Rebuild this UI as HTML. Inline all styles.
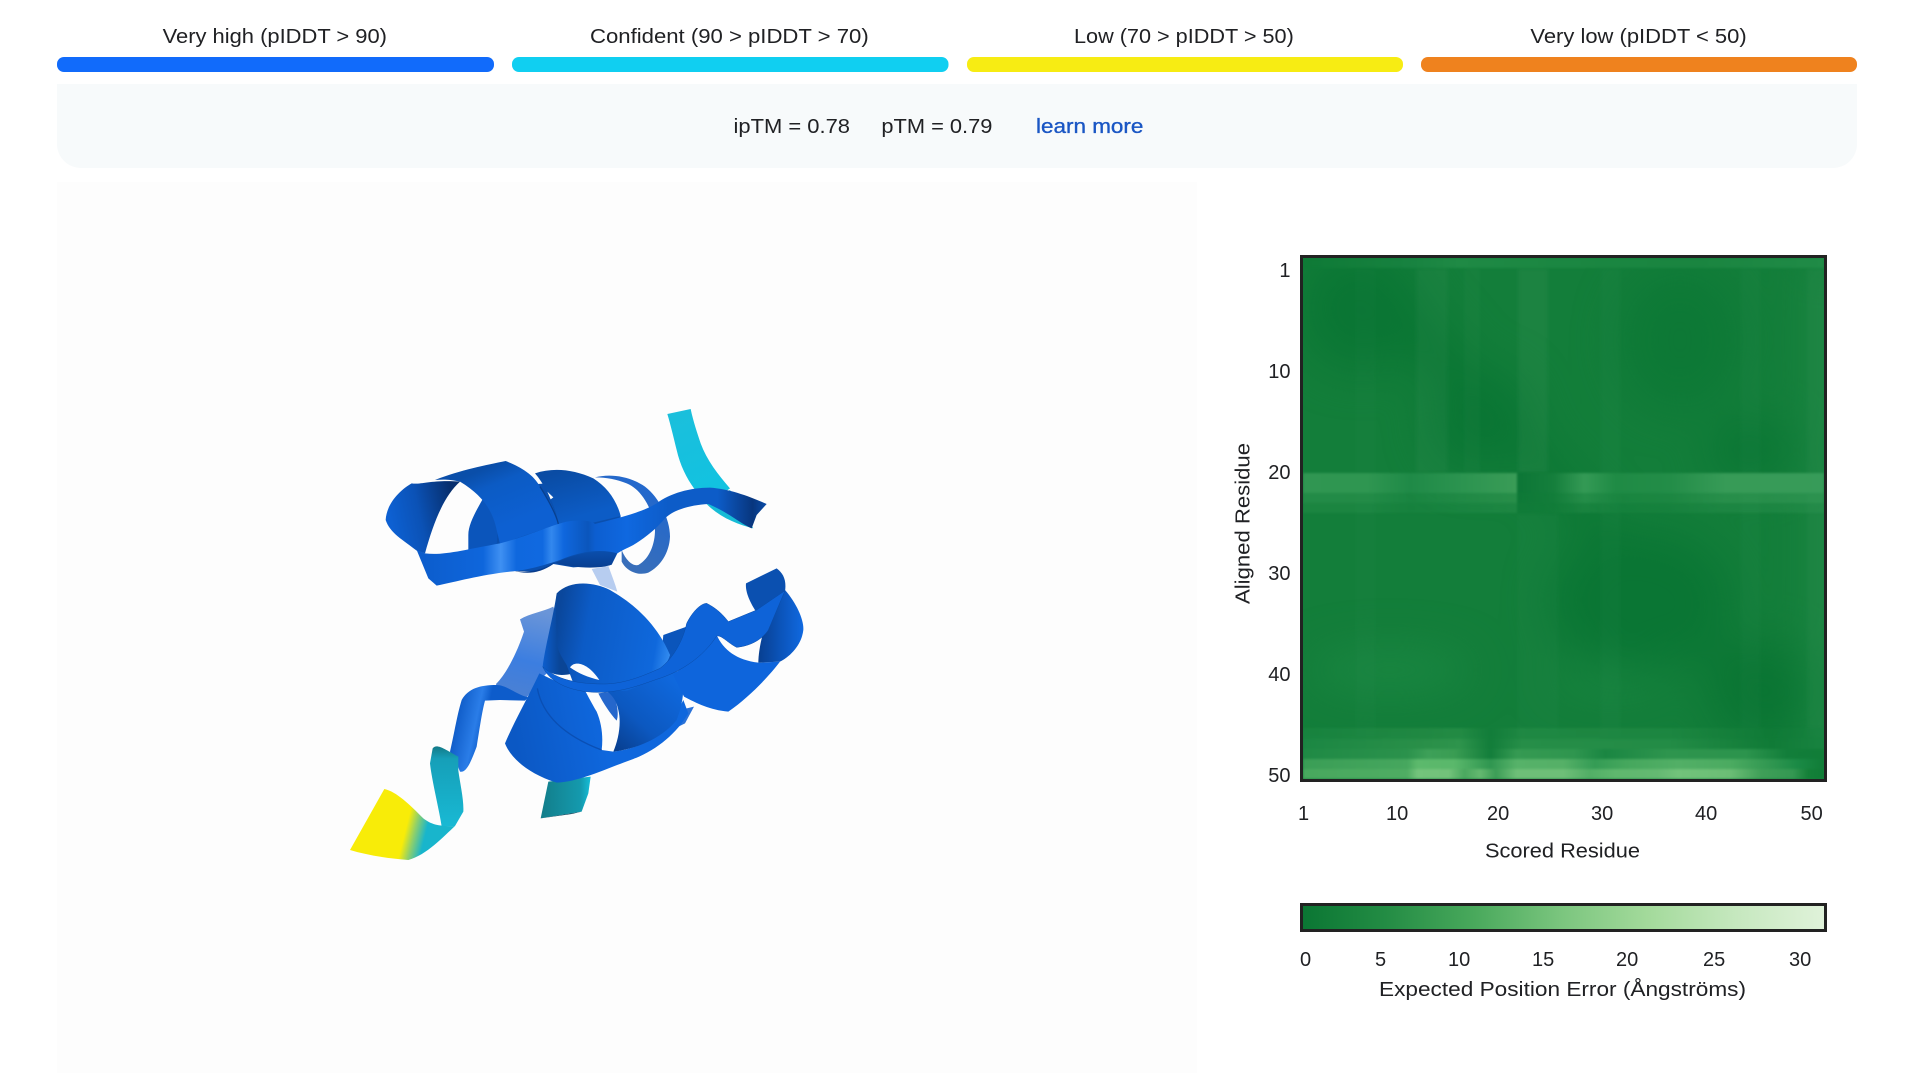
<!DOCTYPE html>
<html><head><meta charset="utf-8"><title>AlphaFold prediction</title>
<style>html,body{margin:0;padding:0;background:#fff;width:1907px;height:1073px;overflow:hidden}svg{display:block}
text{font-family:"Liberation Sans",Arial,sans-serif;fill:#202124;font-size:20px}
</style></head><body>
<svg width="1907" height="1073" viewBox="0 0 1907 1073" xmlns="http://www.w3.org/2000/svg">
<defs>
<filter id="b" x="-20%" y="-20%" width="140%" height="140%" color-interpolation-filters="sRGB"><feGaussianBlur stdDeviation="22"/></filter>
<filter id="b2" x="-5%" y="-5%" width="110%" height="110%" color-interpolation-filters="sRGB"><feGaussianBlur stdDeviation="1"/></filter>
<filter id="b3" x="-5%" y="-5%" width="110%" height="110%" color-interpolation-filters="sRGB"><feGaussianBlur stdDeviation="2"/></filter>
<clipPath id="hm"><rect x="1303" y="258" width="521" height="521"/></clipPath>
<linearGradient id="fade" x1="0" y1="0" x2="0" y2="1"><stop offset="0" stop-color="#fff" stop-opacity="1"/><stop offset=".42" stop-color="#fff" stop-opacity=".9"/><stop offset=".7" stop-color="#fff" stop-opacity=".35"/><stop offset="1" stop-color="#fff" stop-opacity=".6"/></linearGradient>
<linearGradient id="cb"><stop offset="0" stop-color="#0a7633"/><stop offset=".16" stop-color="#238c44"/><stop offset=".33" stop-color="#49a95c"/><stop offset=".5" stop-color="#7cc67f"/><stop offset=".66" stop-color="#a3da9b"/><stop offset=".83" stop-color="#c6e8bf"/><stop offset="1" stop-color="#e0f2da"/></linearGradient>
<linearGradient id="t1" gradientUnits="userSpaceOnUse" x1="1303" x2="1824" y1="0" y2="0"><stop offset="0" stop-color="#0e7a36"/><stop offset=".2" stop-color="#178240"/><stop offset=".3" stop-color="#1f8a45"/><stop offset=".5" stop-color="#1b8742"/><stop offset=".75" stop-color="#1a8540"/><stop offset="1" stop-color="#208b47"/></linearGradient>
<linearGradient id="bl" gradientUnits="userSpaceOnUse" x1="1303" x2="1517" y1="0" y2="0"><stop offset="0" stop-color="#309652"/><stop offset=".3" stop-color="#2f9651"/><stop offset=".5" stop-color="#1f8a47"/><stop offset=".75" stop-color="#2c9450"/><stop offset="1" stop-color="#3a9c57"/></linearGradient>
<linearGradient id="br" gradientUnits="userSpaceOnUse" x1="1517" x2="1824" y1="0" y2="0"><stop offset="0" stop-color="#0c7636"/><stop offset=".12" stop-color="#157f3c"/><stop offset=".22" stop-color="#349a55"/><stop offset=".32" stop-color="#1f8b45"/><stop offset=".5" stop-color="#238d48"/><stop offset=".68" stop-color="#379b57"/><stop offset="1" stop-color="#379b59"/></linearGradient>
<linearGradient id="ra" gradientUnits="userSpaceOnUse" x1="1303" x2="1824" y1="0" y2="0"><stop offset="0" stop-color="#48a85e"/><stop offset=".2" stop-color="#4fad63"/><stop offset=".22" stop-color="#74c47c"/><stop offset=".28" stop-color="#72c27a"/><stop offset=".31" stop-color="#4aa85f"/><stop offset=".34" stop-color="#64b970"/><stop offset=".37" stop-color="#3c9d56"/><stop offset=".41" stop-color="#6ebf78"/><stop offset=".5" stop-color="#6ebf78"/><stop offset=".55" stop-color="#52ae66"/><stop offset=".6" stop-color="#5fb86e"/><stop offset=".68" stop-color="#64b972"/><stop offset=".72" stop-color="#72c37b"/><stop offset=".82" stop-color="#6bbd75"/><stop offset=".88" stop-color="#3f9f58"/><stop offset=".94" stop-color="#349852"/><stop offset=".97" stop-color="#148038"/><stop offset="1" stop-color="#107c37"/></linearGradient>
<linearGradient id="rb" gradientUnits="userSpaceOnUse" x1="1303" x2="1824" y1="0" y2="0"><stop offset="0" stop-color="#3a9e56"/><stop offset=".2" stop-color="#46a75e"/><stop offset=".22" stop-color="#5cb96c"/><stop offset=".29" stop-color="#5ab86b"/><stop offset=".36" stop-color="#2f9650"/><stop offset=".41" stop-color="#56b269"/><stop offset=".5" stop-color="#55b067"/><stop offset=".56" stop-color="#349c55"/><stop offset=".62" stop-color="#45a75d"/><stop offset=".72" stop-color="#52af66"/><stop offset=".82" stop-color="#4bab61"/><stop offset=".9" stop-color="#2f9650"/><stop offset=".95" stop-color="#1a8a45"/><stop offset="1" stop-color="#107c37"/></linearGradient>
<linearGradient id="rc" gradientUnits="userSpaceOnUse" x1="1303" x2="1824" y1="0" y2="0"><stop offset="0" stop-color="#1f8a45"/><stop offset=".2" stop-color="#2b924c"/><stop offset=".24" stop-color="#3da058"/><stop offset=".29" stop-color="#3a9d53"/><stop offset=".36" stop-color="#137e3b"/><stop offset=".41" stop-color="#359a52"/><stop offset=".52" stop-color="#2f964f"/><stop offset=".58" stop-color="#1a8642"/><stop offset=".7" stop-color="#2e954e"/><stop offset=".85" stop-color="#2c944d"/><stop offset=".93" stop-color="#127e3a"/><stop offset="1" stop-color="#117d38"/></linearGradient>
<linearGradient id="rd" gradientUnits="userSpaceOnUse" x1="1303" x2="1824" y1="0" y2="0"><stop offset="0" stop-color="#1b8743"/><stop offset=".24" stop-color="#2a9049"/><stop offset=".3" stop-color="#2e944c"/><stop offset=".36" stop-color="#127d3a"/><stop offset=".42" stop-color="#268e48"/><stop offset=".7" stop-color="#238c46"/><stop offset=".9" stop-color="#107b37"/><stop offset="1" stop-color="#188340"/></linearGradient>

<linearGradient id="lobe1" gradientUnits="userSpaceOnUse" x1="150" y1="380" x2="340" y2="340"><stop offset="0" stop-color="#0d60d2"/><stop offset=".45" stop-color="#0b52b6"/><stop offset="1" stop-color="#072f6e"/></linearGradient>
<linearGradient id="cyl1" gradientUnits="userSpaceOnUse" x1="450" y1="230" x2="520" y2="400"><stop offset="0" stop-color="#0a4ea9"/><stop offset=".3" stop-color="#0c5bc4"/><stop offset="1" stop-color="#0d60d2"/></linearGradient>
<linearGradient id="cyl2" gradientUnits="userSpaceOnUse" x1="680" y1="240" x2="720" y2="380"><stop offset="0" stop-color="#0a4ca4"/><stop offset="1" stop-color="#0c5cc6"/></linearGradient>
<linearGradient id="rib" gradientUnits="userSpaceOnUse" x1="230" y1="0" x2="1280" y2="0"><stop offset="0" stop-color="#0c5ccb"/><stop offset=".19" stop-color="#0e66dc"/><stop offset=".24" stop-color="#3f90f2"/><stop offset=".285" stop-color="#0f68de"/><stop offset=".36" stop-color="#1069e0"/><stop offset=".385" stop-color="#3388ee"/><stop offset=".42" stop-color="#0f67de"/><stop offset=".49" stop-color="#0b56bc"/><stop offset=".51" stop-color="#0c5ed0"/><stop offset=".6" stop-color="#0f68e0"/><stop offset=".72" stop-color="#0d5cc8"/><stop offset=".86" stop-color="#0d5cc8"/><stop offset=".96" stop-color="#08367e"/><stop offset="1" stop-color="#0a4ca8"/></linearGradient>
<linearGradient id="und" gradientUnits="userSpaceOnUse" x1="0" y1="480" x2="0" y2="550"><stop offset="0" stop-color="#0a4fae"/><stop offset="1" stop-color="#083a88"/></linearGradient>
<linearGradient id="back" gradientUnits="userSpaceOnUse" x1="850" y1="540" x2="980" y2="340"><stop offset="0" stop-color="#3a6fb8"/><stop offset="1" stop-color="#2368cc"/></linearGradient>
<linearGradient id="cy1" gradientUnits="userSpaceOnUse" x1="1000" y1="70" x2="1100" y2="300"><stop offset="0" stop-color="#1bbfdc"/><stop offset="1" stop-color="#12c2e0"/></linearGradient>
<linearGradient id="lobeA" gradientUnits="userSpaceOnUse" x1="650" y1="200" x2="1000" y2="260"><stop offset="0" stop-color="#0a479c"/><stop offset=".25" stop-color="#0c5bc6"/><stop offset=".85" stop-color="#0f68dc"/><stop offset=".97" stop-color="#2f88ee"/><stop offset="1" stop-color="#4a9cf4"/></linearGradient>
<linearGradient id="lobeB" gradientUnits="userSpaceOnUse" x1="610" y1="200" x2="660" y2="200"><stop offset="0" stop-color="#0c5dcc"/><stop offset="1" stop-color="#0a4596"/></linearGradient>
<linearGradient id="sheet" gradientUnits="userSpaceOnUse" x1="580" y1="150" x2="520" y2="400"><stop offset="0" stop-color="#6a95d8"/><stop offset=".6" stop-color="#3c7ee0"/><stop offset="1" stop-color="#4a80d4"/></linearGradient>
<linearGradient id="b1g" gradientUnits="userSpaceOnUse" x1="1010" y1="370" x2="830" y2="570"><stop offset="0" stop-color="#0f68dd"/><stop offset=".6" stop-color="#0c58c0"/><stop offset="1" stop-color="#083f90"/></linearGradient>
<linearGradient id="b2g" gradientUnits="userSpaceOnUse" x1="520" y1="520" x2="780" y2="470"><stop offset="0" stop-color="#0b58c4"/><stop offset="1" stop-color="#0f67dd"/></linearGradient>
<linearGradient id="rin" gradientUnits="userSpaceOnUse" x1="1255" y1="0" x2="1390" y2="0"><stop offset="0" stop-color="#083f90"/><stop offset=".5" stop-color="#0b54ba"/><stop offset="1" stop-color="#1069e0"/></linearGradient>
<linearGradient id="chain" gradientUnits="userSpaceOnUse" x1="335" y1="500" x2="430" y2="520"><stop offset="0" stop-color="#0c58c4"/><stop offset=".7" stop-color="#2a7de8"/><stop offset="1" stop-color="#0d5ccb"/></linearGradient>
<linearGradient id="cyc" gradientUnits="userSpaceOnUse" x1="0" y1="560" x2="0" y2="800"><stop offset="0" stop-color="#137a88"/><stop offset=".15" stop-color="#169fb8"/><stop offset="1" stop-color="#18b9d4"/></linearGradient>
<linearGradient id="ye" gradientUnits="userSpaceOnUse" x1="190" y1="835" x2="250" y2="850"><stop offset="0" stop-color="#f8ec08"/><stop offset=".45" stop-color="#8fd06a"/><stop offset="1" stop-color="#18b5cc"/></linearGradient>
<linearGradient id="st" gradientUnits="userSpaceOnUse" x1="610" y1="0" x2="750" y2="0"><stop offset="0" stop-color="#137f8c"/><stop offset=".8" stop-color="#149aae"/><stop offset="1" stop-color="#16bcd6"/></linearGradient>
</defs>

<rect x="57" y="57" width="437" height="15" rx="7" fill="#116bfb"/>
<rect x="512" y="57" width="436.5" height="15" rx="7" fill="#10cff1"/>
<rect x="967" y="57" width="436" height="15" rx="7" fill="#f7ec13"/>
<rect x="1421" y="57" width="436" height="15" rx="7" fill="#ef821e"/>
<text x="162.6" y="43" textLength="224.4" lengthAdjust="spacingAndGlyphs">Very high (pIDDT &gt; 90)</text>
<text x="590" y="43" textLength="278.7" lengthAdjust="spacingAndGlyphs">Confident (90 &gt; pIDDT &gt; 70)</text>
<text x="1074" y="43" textLength="219.8" lengthAdjust="spacingAndGlyphs">Low (70 &gt; pIDDT &gt; 50)</text>
<text x="1530.4" y="43" textLength="216.3" lengthAdjust="spacingAndGlyphs">Very low (pIDDT &lt; 50)</text>

<path d="M57,84H1857V144a24,24 0 0 1 -24,24H81a24,24 0 0 1 -24,-24Z" fill="#f7fafb"/>
<text x="733.5" y="133" textLength="116.5" lengthAdjust="spacingAndGlyphs">ipTM = 0.78</text>
<text x="881.4" y="133" textLength="111" lengthAdjust="spacingAndGlyphs">pTM = 0.79</text>
<text x="1036" y="133" textLength="107.4" lengthAdjust="spacingAndGlyphs" style="fill:#1a56c4;stroke:#1a56c4;stroke-width:.35">learn more</text>

<rect x="57" y="182" width="1140" height="891" fill="#fdfdfd"/>

<!-- protein top -->
<g transform="translate(340,390) scale(.33333)">
<path d="M755,537L805,528C815,555 825,580 832,605L780,585Z" fill="#b7cdf0"/>
<path d="M765,262C810,250 870,258 915,290C960,325 990,390 990,440C988,490 960,530 925,548C895,558 860,545 845,515L845,480C855,505 875,530 895,525C930,505 945,460 945,420C942,370 910,300 860,280C830,268 800,262 765,262Z" fill="url(#back)"/>
<path d="M982,72L1052,57C1060,95 1072,130 1082,160C1100,210 1135,255 1170,295L1105,342L1062,295C1040,265 1020,225 1010,180C1000,140 992,105 982,72Z" fill="url(#cy1)"/>
<path d="M1098,340L1170,300L1240,415C1195,405 1135,380 1098,340Z" fill="#16bcd6"/>
<path d="M435,315C410,360 385,400 385,435L385,480L490,470C480,400 460,360 435,315Z" fill="#0b55bb"/>
<path d="M480,290L620,280L760,300L842,378L832,490L815,524L700,532L640,522L590,545L510,542L470,470Z" fill="#0a4fae"/>
<path d="M585,250C640,232 700,238 760,265C800,290 830,330 842,378L760,398L655,402C650,360 620,290 585,250Z" fill="url(#cyl2)"/>
<path d="M137,390C140,340 180,300 215,280C240,285 280,268 360,275C310,320 280,400 255,490L230,482C190,450 150,430 137,390Z" fill="url(#lobe1)"/>
<path d="M285,270C360,240 440,225 497,213C540,230 580,252 600,290C630,330 650,370 655,402L480,462L470,420C460,370 435,320 360,275C330,268 310,268 285,270Z" fill="url(#cyl1)"/>
<path d="M600,290C625,330 648,370 655,402" fill="none" stroke="#08408f" stroke-width="4"/>
<path d="M515,540C560,555 600,550 640,522C700,490 770,480 832,488L815,524C780,538 700,535 640,518C610,540 560,552 515,540Z" fill="url(#und)"/>
<path d="M230,480L255,490C310,497 370,480 480,460C560,440 620,410 680,395C720,388 755,392 765,402C830,385 900,370 950,340C990,310 1050,293 1110,293C1170,297 1230,320 1280,342L1250,375L1235,415C1200,400 1170,370 1105,342C1050,345 1000,360 975,385C950,415 920,440 880,465C860,475 845,482 832,490C790,478 730,480 660,510C600,530 560,540 510,545C420,555 350,575 290,587L265,565Z" fill="url(#rib)"/>
<path d="M622,305L640,322L632,328Z" fill="#fdfdfd"/>
</g>
<!-- protein bottom -->
<g transform="translate(340,560) scale(.33333)">
<path d="M540,178C570,160 610,155 640,140L660,200L620,340L600,360L558,415L480,420L468,372C500,340 530,280 552,215Z" fill="url(#sheet)"/>
<path d="M330,575C345,510 350,470 365,420C385,385 420,375 470,375C500,375 530,405 565,412L555,422L480,420L435,422C425,460 420,500 410,560C395,600 380,640 360,635L350,610Z" fill="url(#chain)"/>
<path d="M278,565C290,550 310,565 355,590L355,632C360,670 372,720 370,755L345,798L305,800C300,760 275,660 270,610Z" fill="url(#cyc)"/>
<path d="M133,687C170,695 210,735 250,775C270,790 290,800 345,798C310,830 260,885 205,900C140,895 80,885 30,870Z" fill="url(#ye)"/>
<path d="M625,665L752,650L745,700L725,755L602,775Z" fill="url(#st)"/>
<path d="M602,775L725,755L695,762Z" fill="#0a3a50"/>
<path d="M1020,450L1062,440L1035,490L1005,505Z" fill="#2a72d8"/>
<path d="M775,400L815,395C830,420 838,460 830,482C810,460 790,430 775,400Z" fill="#2567cc"/>
<path d="M970,225L1040,200L1030,300L960,330Z" fill="#0b55bb"/>
<path d="M598,340C560,420 520,490 495,550C510,590 560,640 650,668C720,665 800,625 880,597C950,570 1010,520 1045,460L1030,420L1000,480C960,530 900,565 820,575L785,570C790,530 785,490 770,455C755,430 745,410 735,392L640,360Z" fill="url(#b2g)"/>
<path d="M592,385C608,470 680,530 785,570" fill="none" stroke="#0a4fb4" stroke-width="4"/>
<path d="M800,392L1025,330C1035,380 1030,430 1010,480C970,530 900,565 820,575C835,540 845,490 835,450C830,425 820,410 800,392Z" fill="url(#b1g)"/>
<path d="M1000,345L1130,225C1150,270 1190,300 1255,308L1320,305C1290,345 1230,410 1165,455C1110,450 1070,430 1032,410Z" fill="#0e65dc"/>
<path d="M1255,308C1255,270 1270,200 1290,165L1335,90C1370,130 1392,180 1390,210C1385,255 1350,290 1320,305Z" fill="url(#rin)"/>
<path d="M1218,70L1310,25C1330,40 1340,60 1335,95L1250,158C1235,135 1215,100 1218,70Z" fill="#0b50b0"/>
<path d="M650,100C640,170 615,260 608,320C630,345 660,350 700,340L680,240Z" fill="url(#lobeB)"/>
<path d="M650,100C690,60 760,65 810,90C880,130 950,190 990,285C975,340 900,380 860,392L790,395L700,370L680,315C665,290 650,270 650,240C650,200 645,150 650,100Z" fill="url(#lobeA)"/>
<path d="M608,320C640,350 690,372 790,372C850,372 905,350 960,325C1000,295 1030,240 1040,190C1060,150 1085,130 1100,130C1130,145 1150,165 1165,185L1250,150L1335,92L1285,210C1265,240 1230,258 1190,262C1165,250 1145,225 1130,228C1090,290 1025,335 950,358C900,375 860,392 790,397C700,400 630,370 608,320Z" fill="#0e63d8" stroke="#0a4ca8" stroke-width="1.5"/>
<path d="M690,322C705,300 745,310 778,360C745,352 715,340 690,322Z" fill="#fdfdfd"/>
</g>

<!-- heatmap -->
<g clip-path="url(#hm)">
<rect x="1303" y="258" width="521" height="521" fill="#137e3a"/>
<g filter="url(#b)">
<path d="M1290,250L1540,480L1780,740L1840,790L1700,620L1530,430L1420,300Z" fill="#0a7633"/>
<ellipse cx="1360" cy="310" rx="60" ry="60" fill="#0a7634"/>
<ellipse cx="1480" cy="420" rx="50" ry="50" fill="#0a7634"/>
<ellipse cx="1680" cy="340" rx="60" ry="70" fill="#0d7936"/>
<ellipse cx="1750" cy="450" rx="40" ry="30" fill="#0a7634"/>
<ellipse cx="1640" cy="600" rx="90" ry="70" fill="#0a7634"/>
<ellipse cx="1760" cy="690" rx="50" ry="50" fill="#0a7533"/>
<rect x="1812" y="258" width="30" height="521" fill="#1e8945"/>
<ellipse cx="1390" cy="670" rx="80" ry="20" fill="#1a8742"/>
<ellipse cx="1610" cy="680" rx="60" ry="12" fill="#198641"/>
</g>
<g filter="url(#b3)" fill="#fff">
<rect x="1355" y="268" width="21" height="470" opacity=".012"/>
<rect x="1416" y="268" width="32" height="205" opacity=".03"/>
<rect x="1464" y="268" width="16" height="205" opacity=".02"/>
<rect x="1518" y="268" width="30" height="205" opacity=".04"/>
<rect x="1600" y="268" width="21" height="470" opacity=".015"/>
<rect x="1740" y="268" width="21" height="470" opacity=".015"/>
<rect x="1807" y="268" width="17" height="470" opacity=".025"/>
<rect x="1517" y="513" width="42" height="225" opacity=".015"/>
</g>
<g filter="url(#b2)">
<rect x="1303" y="258" width="521" height="10" fill="url(#t1)"/>
<rect x="1303" y="473" width="214" height="20" fill="url(#bl)"/>
<rect x="1303" y="493" width="214" height="10" fill="url(#bl)" opacity=".55"/>
<rect x="1303" y="503" width="214" height="10" fill="url(#bl)" opacity=".3"/>
<rect x="1517" y="473" width="307" height="20" fill="url(#br)"/>
<rect x="1517" y="493" width="307" height="10" fill="url(#br)" opacity=".6"/>
<rect x="1517" y="503" width="307" height="10" fill="url(#br)" opacity=".3"/>
<rect x="1303" y="728" width="521" height="11" fill="url(#rd)" opacity=".6"/>
<rect x="1303" y="739" width="521" height="10" fill="url(#rd)"/>
<rect x="1303" y="749" width="521" height="10" fill="url(#rc)"/>
<rect x="1303" y="759" width="521" height="10" fill="url(#rb)"/>
<rect x="1303" y="769" width="521" height="10" fill="url(#ra)"/>
</g>
</g>
<rect x="1301.5" y="256.5" width="524" height="524" fill="none" stroke="#222" stroke-width="3"/>

<text x="1290.5" y="277" text-anchor="end">1</text>
<text x="1290.5" y="378" text-anchor="end">10</text>
<text x="1290.5" y="479" text-anchor="end">20</text>
<text x="1290.5" y="580" text-anchor="end">30</text>
<text x="1290.5" y="681" text-anchor="end">40</text>
<text x="1290.5" y="782" text-anchor="end">50</text>
<text x="1298" y="820">1</text>
<text x="1386" y="820">10</text>
<text x="1487" y="820">20</text>
<text x="1591" y="820">30</text>
<text x="1695" y="820">40</text>
<text x="1800.5" y="820">50</text>
<text x="1485" y="857.5" textLength="155" lengthAdjust="spacingAndGlyphs">Scored Residue</text>
<text transform="translate(1249.5,604) rotate(-90)" textLength="161" lengthAdjust="spacingAndGlyphs">Aligned Residue</text>

<rect x="1301.5" y="904.5" width="524" height="26" fill="url(#cb)" stroke="#222" stroke-width="3"/>
<text x="1300" y="966">0</text>
<text x="1375" y="966">5</text>
<text x="1448" y="966">10</text>
<text x="1532" y="966">15</text>
<text x="1616" y="966">20</text>
<text x="1703" y="966">25</text>
<text x="1789" y="966">30</text>
<text x="1379" y="996" textLength="367" lengthAdjust="spacingAndGlyphs">Expected Position Error (Ångströms)</text>
</svg>
</body></html>
